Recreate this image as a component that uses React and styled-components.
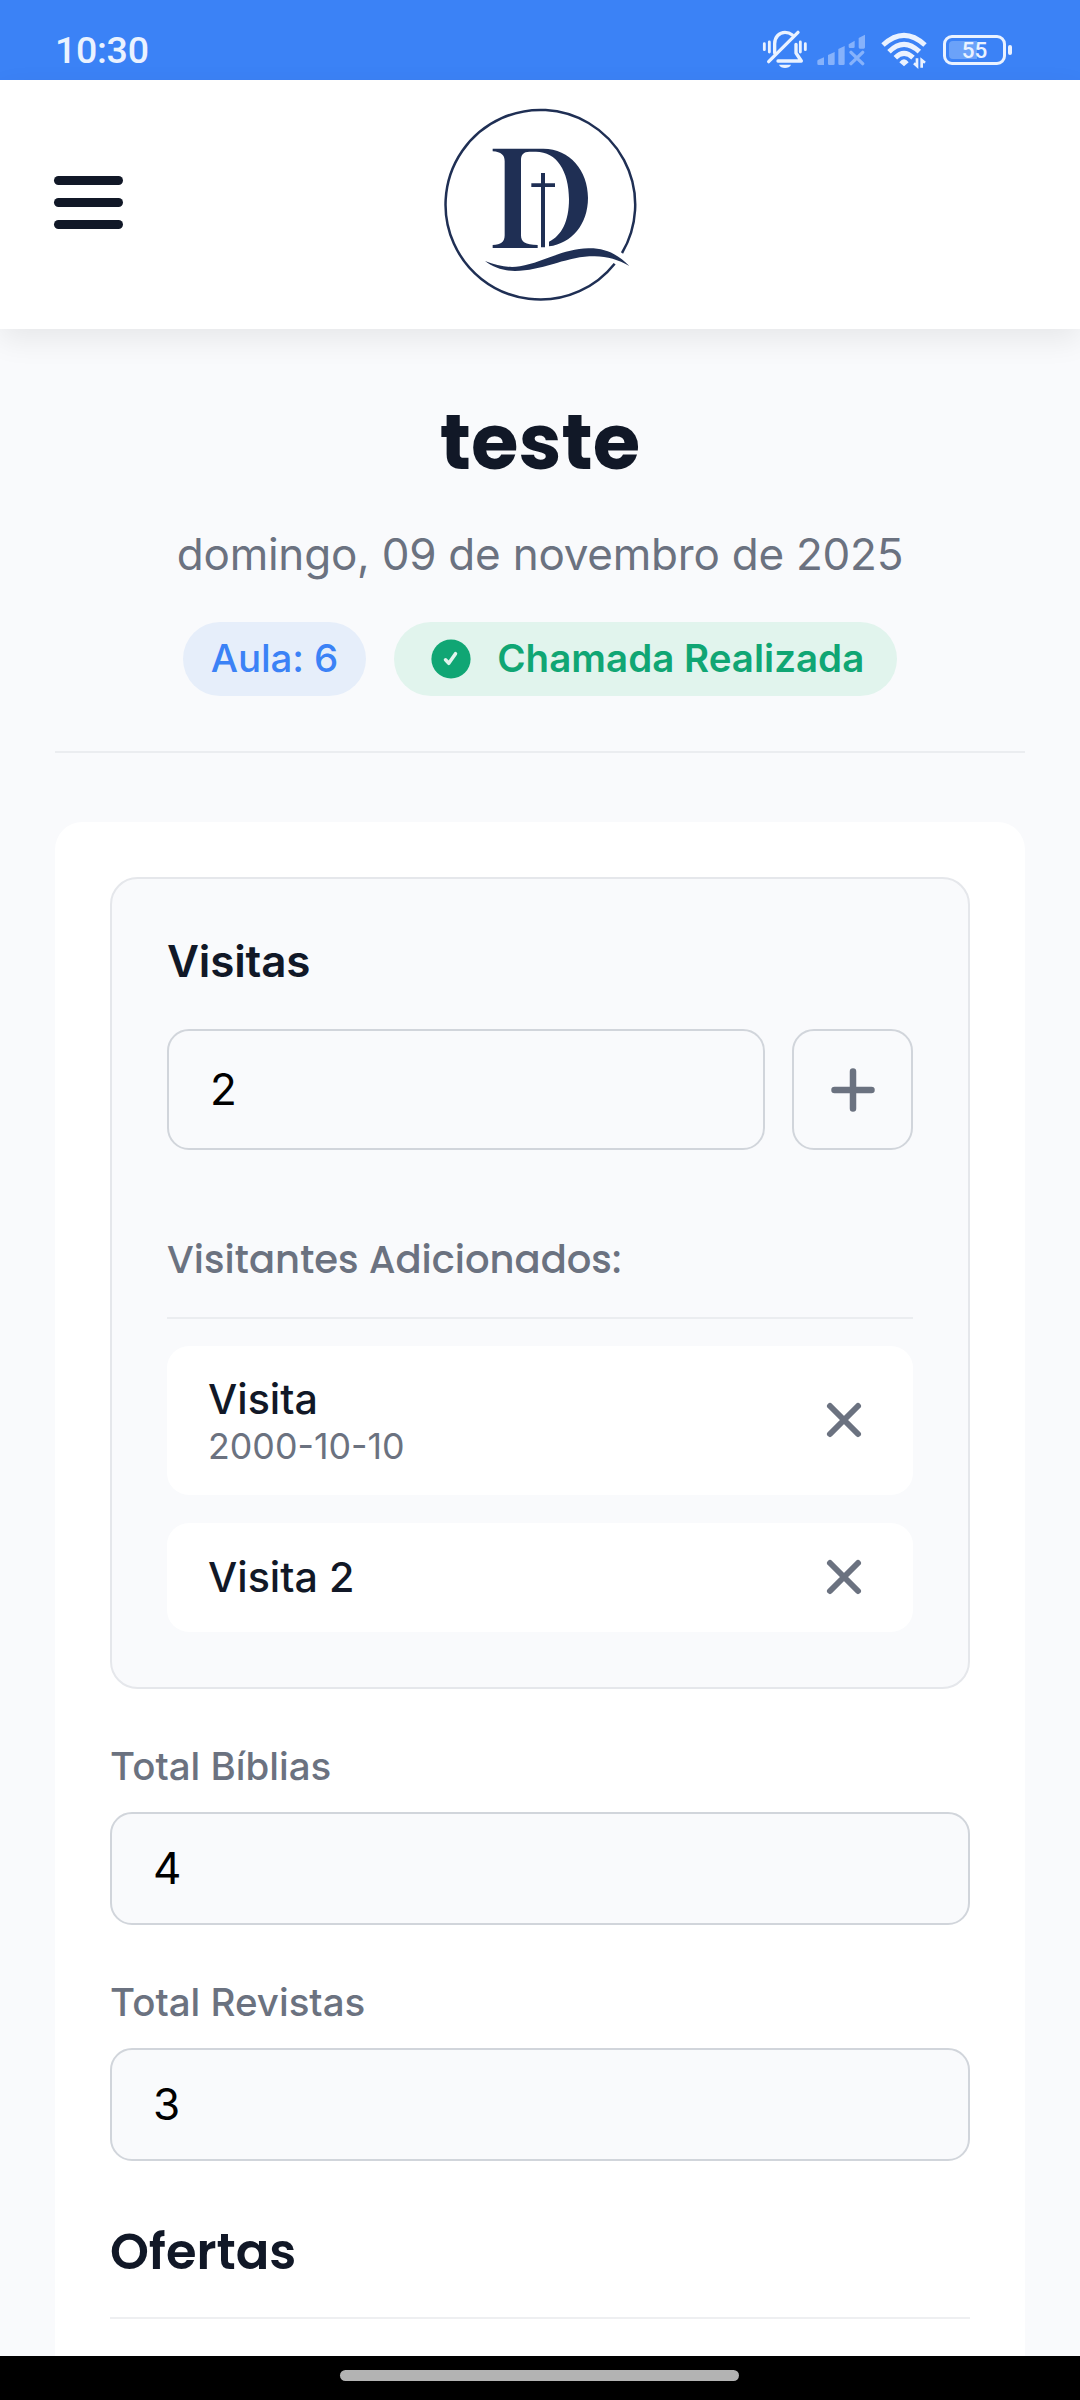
import React from "react";
import styled, { createGlobalStyle } from "styled-components";

const GlobalStyle = createGlobalStyle`
  * { box-sizing: border-box; }
  body {
    margin: 0;
    background: #f9fafc;
    color: #111827;
    font-family: Inter, "Liberation Sans", sans-serif;
  }
`;

const Screen = styled.div`
  width: 1080px;
  height: 2400px;
  display: flex;
  flex-direction: column;
  overflow: hidden;
  background: #f9fafc;
`;

const StatusBar = styled.div`
  flex: none;
  height: 80px;
  display: flex;
  align-items: center;
  justify-content: space-between;
  padding: 19px 68px 0 55px;
  background: #3b82f6;
  color: #eaf2ff;
`;

const Clock = styled.span`
  padding-top: 1px;
  font: 500 37.5px/44px Roboto, sans-serif;
  letter-spacing: -0.3px;
`;

const StatusIcons = styled.div`
  display: flex;
  align-items: center;
`;

const Connectivity = styled.div`
  display: flex;
  align-items: center;
  gap: 14px;
  margin-left: 6px;
`;

const BatteryGroup = styled.div`
  display: flex;
  align-items: center;
  gap: 2px;
  margin-left: 15px;
`;

const BatteryBody = styled.div`
  width: 63px;
  height: 30px;
  padding: 3px;
  border: 3px solid #eaf2ff;
  border-radius: 9px;
`;

const BatteryLevel = styled.div`
  width: 100%;
  height: 100%;
  display: flex;
  align-items: center;
  justify-content: center;
  border-radius: 4px;
  background: linear-gradient(90deg, #6ba2f9 55%, transparent 55%);
  font: 500 22.5px/18px Roboto, sans-serif;
`;

const BatteryTip = styled.span`
  width: 4px;
  height: 10px;
  border-radius: 2px;
  background: #eaf2ff;
`;

const Header = styled.header`
  flex: none;
  height: 249px;
  display: grid;
  grid-template-columns: 1fr auto 1fr;
  align-items: center;
  padding: 2px 54px 0;
  background: #ffffff;
  box-shadow: 0 11px 28px rgba(0, 0, 0, 0.073);
  z-index: 1;
`;

const MenuButton = styled.button`
  width: 69px;
  display: flex;
  flex-direction: column;
  gap: 13px;
  padding: 0;
  margin-bottom: 6px;
  border: 0;
  background: none;
`;

const MenuLine = styled.span`
  height: 9px;
  border-radius: 5px;
  background: #111827;
`;

const Main = styled.main`
  flex: 1;
  min-height: 0;
  overflow: hidden;
  padding: 57px 55px 0;
`;

const PageHead = styled.section`
  display: flex;
  flex-direction: column;
  align-items: center;
  padding-bottom: 55px;
  border-bottom: 2px solid #ebedf0;
`;

const Title = styled.h1`
  margin: 0;
  font: 700 77px/112px Poppins, Inter, sans-serif;
`;

const DateLine = styled.p`
  margin: 21px 0 33px;
  font-size: 44px;
  line-height: 70px;
  letter-spacing: -0.23px;
  color: #6b7280;
`;

const Chips = styled.div`
  display: flex;
  gap: 28px;
`;

const Chip = styled.span`
  height: 74px;
  display: flex;
  align-items: center;
  gap: 26px;
  padding: ${(p) => (p.$success ? "0 33px 2px 37px" : "0 28px 2px")};
  border-radius: 37px;
  background: ${(p) => (p.$success ? "#e1f4ed" : "#e6eefa")};
  color: ${(p) => (p.$success ? "#10a674" : "#3b82f6")};
  font-size: 38.5px;
  font-weight: ${(p) => (p.$success ? 600 : 500)};
  letter-spacing: ${(p) => (p.$success ? 0.02 : -0.1)}px;
  line-height: 72px;

  svg {
    margin-top: 2px;
  }
`;

const Card = styled.section`
  margin-top: 69px;
  height: 1700px;
  padding: 55px;
  border-radius: 27.5px;
  background: #ffffff;
`;

const VisitsPanel = styled.div`
  padding: 55px;
  border: 2px solid #e5e7eb;
  border-radius: 27.5px;
  background: #f9fafc;
`;

const PanelLabel = styled.label`
  display: block;
  font-size: 44px;
  font-weight: 600;
  line-height: 54px;
  letter-spacing: -0.15px;
`;

const CountRow = styled.div`
  display: grid;
  grid-template-columns: 1fr 121px;
  gap: 27px;
  margin-top: 41px;
`;

const NumberInput = styled.input`
  width: 100%;
  height: ${(p) => (p.$tall ? 121 : 113)}px;
  padding: 0 41px 2px;
  border: 2px solid #d1d5db;
  border-radius: 22px;
  background: #f9fafc;
  color: #000000;
  font: 400 44px Inter, sans-serif;
  outline: none;
`;

const AddButton = styled.button`
  display: flex;
  align-items: center;
  justify-content: center;
  padding: 0;
  border: 2px solid #d1d5db;
  border-radius: 22px;
  background: #f9fafc;
`;

const ListHeading = styled.h4`
  margin: 83px 0 27px;
  padding-bottom: 30px;
  border-bottom: 2px solid #ebedf0;
  color: #6b7280;
  font: 500 38.5px/54px Poppins, Inter, sans-serif;
`;

const VisitorList = styled.ul`
  display: flex;
  flex-direction: column;
  gap: 28px;
  margin: 0;
  padding: 0;
  list-style: none;
`;

const Visitor = styled.li`
  height: ${(p) => (p.$detailed ? 149 : 109)}px;
  display: flex;
  align-items: center;
  justify-content: space-between;
  padding: 0 50px 0 41px;
  border-radius: 22px;
  background: #ffffff;
`;

const VisitorText = styled.div`
  display: flex;
  flex-direction: column;
  padding: ${(p) => (p.$detailed ? "1px 0 0" : "0 0 2px")};
`;

const VisitorName = styled.span`
  font-size: 41.25px;
  font-weight: 500;
  line-height: 50px;
`;

const VisitorDate = styled.span`
  font-size: 35.75px;
  line-height: 44px;
  color: #6b7280;
`;

const RemoveButton = styled.button`
  display: flex;
  margin-bottom: 2px;
  padding: 0;
  border: 0;
  background: none;
`;

const Field = styled.div`
  margin-top: 48px;
`;

const FieldLabel = styled.label`
  display: block;
  margin-bottom: 17px;
  color: #6b7280;
  font-size: 38.5px;
  font-weight: 500;
  line-height: 58px;
`;

const SectionTitle = styled.h3`
  margin: 54px 0 0;
  padding-bottom: 28px;
  border-bottom: 2px solid #eeeff1;
  font: 600 49.5px/74px Poppins, Inter, sans-serif;
`;

const NavBar = styled.div`
  flex: none;
  height: 44px;
  display: flex;
  justify-content: center;
  padding: 14px 1px 0 0;
  background: #000000;
  z-index: 1;
`;

const NavHandle = styled.span`
  width: 399px;
  height: 11px;
  border-radius: 6px;
  background: #b3b3b3;
`;

const MutedBellIcon = () => (
  <svg width="50" height="42" viewBox="60 58 150 126" fill="none" stroke="#eaf2ff" strokeWidth="10" strokeLinecap="round" strokeLinejoin="round">
    <path d="M73 102V120M88 97V127M181 97V127M196 102V120" strokeWidth="8.500" />
    <path d="M104 130V102C104 82 118 68 135 68C144 68 151 71 157 76" />
    <path d="M86 156L174 68" />
    <path d="M114 154H184L168 130V104" />
    <path d="M117 165H153C148 178 122 178 117 165Z" fill="#eaf2ff" stroke="none" />
  </svg>
);

const NoSignalIcon = () => (
  <svg width="50" height="32" viewBox="228 71 150 96" fill="#86b2fb">
    <path d="M232 152Q232 149 235 148L252 141V164H236Q232 164 232 160ZM264 134L284 125V160Q284 164 280 164H268Q264 164 264 160ZM295 116L314 107V160Q314 164 310 164H299Q295 164 295 160ZM326 102L344 91V109Q344 113 340 113H330Q326 113 326 109ZM356 83L375 73V111Q375 115 371 115H360Q356 115 356 111Z" />
    <path d="M333 126L368 160M368 126L333 160" fill="none" stroke="#86b2fb" strokeWidth="10" strokeLinecap="round" />
  </svg>
);

const WifiIcon = () => (
  <svg width="48" height="38" viewBox="422 62 144 114" fill="none" stroke="#eaf2ff" strokeWidth="15">
    <path d="M431 104Q494 46 557 104M449 124Q494 80 540 124M468 142Q494 116 521 142" />
    <path d="M480 156Q494 138 508 156L494 168Z" fill="#eaf2ff" stroke="none" />
    <path d="M533 144V167L524 159M547 172V149L557 157" strokeWidth="8" />
  </svg>
);

const Logo = () => (
  <svg width="220" height="220" viewBox="0 0 660 660" fill="#1f2f54">
    <path d="M576 471A284.500 284.500 0 1 0 554 503" fill="none" stroke="#1f2f54" strokeWidth="7.500" />
    <path d="M188 158H340C420 158 474 225 474 305C474 385 425 442 357 451V437C395 420 417 375 417 310C417 225 380 167 318 167H298C281 167 273 176 273 192V418C273 438 285 446 323 447V456H188V447C213 446 224 438 224 418V196C224 177 214 168 188 166Z" />
    <path d="M333 231H345V262H375V273H345V454H333V273H304V262H333Z" />
    <path d="M165 495C200 509 235 517 270 511C335 500 400 458 475 457C525 456 565 475 598 510C560 488 525 478 478 481C400 486 335 525 255 525C220 524 190 515 165 495Z" />
  </svg>
);

const CheckIcon = () => (
  <svg width="40" height="40" viewBox="0 0 40 40">
    <circle cx="20" cy="20" r="19.600" fill="#10a674" />
    <path d="M14.500 20.800L17.800 24.300L24.500 14.700" fill="none" stroke="#e1f4ed" strokeWidth="3.500" strokeLinecap="round" strokeLinejoin="round" />
  </svg>
);

const PlusIcon = () => (
  <svg width="46" height="46" viewBox="0 0 46 46" fill="none" stroke="#6b7280" strokeWidth="6.500" strokeLinecap="round">
    <path d="M23 4.500V41.500M4.500 23H41.500" />
  </svg>
);

const CloseIcon = () => (
  <svg width="38" height="38" viewBox="0 0 38 38" fill="none" stroke="#6b7280" strokeWidth="6" strokeLinecap="round">
    <path d="M5 5L33 33M33 5L5 33" />
  </svg>
);

const visitors = [
  { name: "Visita", date: "2000-10-10" },
  { name: "Visita 2" },
];

const totals = [
  { id: "biblias", label: "Total Bíblias", value: 4 },
  { id: "revistas", label: "Total Revistas", value: 3 },
];

export default function App() {
  return (
    <Screen>
      <GlobalStyle />
      <StatusBar>
        <Clock>10:30</Clock>
        <StatusIcons>
          <MutedBellIcon />
          <Connectivity>
            <NoSignalIcon />
            <WifiIcon />
          </Connectivity>
          <BatteryGroup>
            <BatteryBody>
              <BatteryLevel>55</BatteryLevel>
            </BatteryBody>
            <BatteryTip />
          </BatteryGroup>
        </StatusIcons>
      </StatusBar>

      <Header>
        <MenuButton aria-label="Menu">
          <MenuLine />
          <MenuLine />
          <MenuLine />
        </MenuButton>
        <Logo />
      </Header>

      <Main>
        <PageHead>
          <Title>teste</Title>
          <DateLine>domingo, 09 de novembro de 2025</DateLine>
          <Chips>
            <Chip>Aula: 6</Chip>
            <Chip $success>
              <CheckIcon />
              Chamada Realizada
            </Chip>
          </Chips>
        </PageHead>

        <Card>
          <VisitsPanel>
            <PanelLabel htmlFor="visitas">Visitas</PanelLabel>
            <CountRow>
              <NumberInput id="visitas" $tall defaultValue={2} />
              <AddButton aria-label="Adicionar visita">
                <PlusIcon />
              </AddButton>
            </CountRow>
            <ListHeading>Visitantes Adicionados:</ListHeading>
            <VisitorList>
              {visitors.map((v) => (
                <Visitor key={v.name} $detailed={Boolean(v.date)}>
                  <VisitorText $detailed={Boolean(v.date)}>
                    <VisitorName>{v.name}</VisitorName>
                    {v.date && <VisitorDate>{v.date}</VisitorDate>}
                  </VisitorText>
                  <RemoveButton aria-label="Remover">
                    <CloseIcon />
                  </RemoveButton>
                </Visitor>
              ))}
            </VisitorList>
          </VisitsPanel>

          {totals.map((t) => (
            <Field key={t.id}>
              <FieldLabel htmlFor={t.id}>{t.label}</FieldLabel>
              <NumberInput id={t.id} defaultValue={t.value} />
            </Field>
          ))}

          <SectionTitle>Ofertas</SectionTitle>
        </Card>
      </Main>

      <NavBar>
        <NavHandle />
      </NavBar>
    </Screen>
  );
}
